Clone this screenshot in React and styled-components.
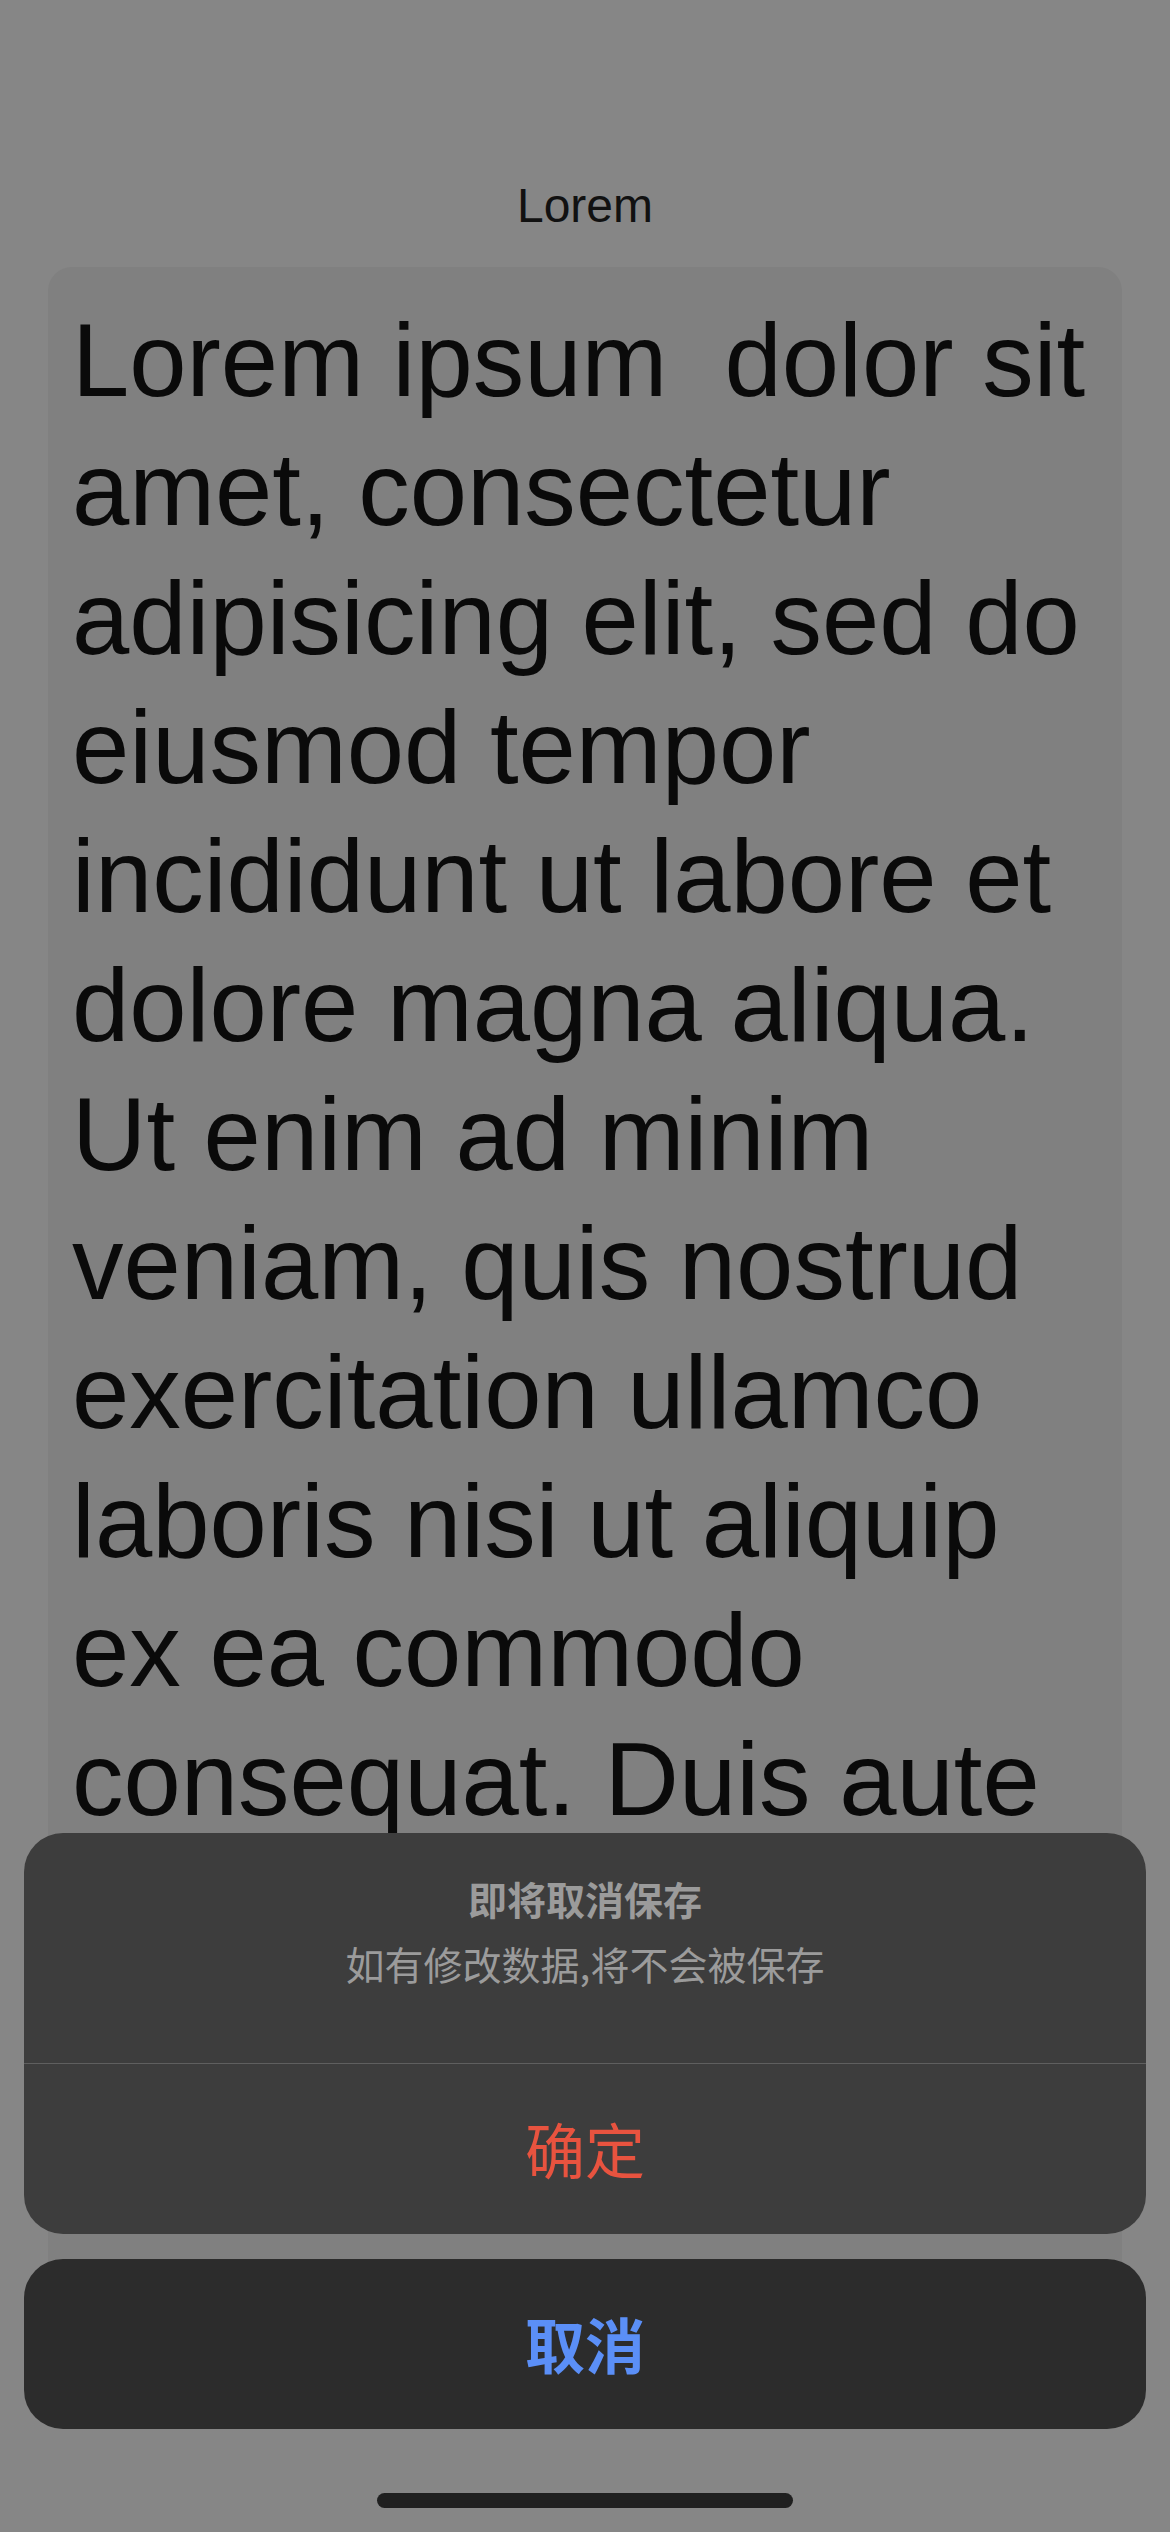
import React from 'react';
import styled, { createGlobalStyle } from 'styled-components';

const GlobalStyle = createGlobalStyle`
  html, body {
    margin: 0;
    padding: 0;
    background-color: #868686;
  }
  * {
    box-sizing: border-box;
  }
`;

const SPage = styled.div`
  position: relative;
  width: 1170px;
  height: 2532px;
  overflow: hidden;
  background-color: #868686;
  font-family: 'Liberation Sans', 'Noto Sans CJK SC', sans-serif;
`;

const STitle = styled.h1`
  margin: 0;
  padding-top: 177px;
  font-size: 48px;
  font-weight: 400;
  line-height: 58px;
  text-align: center;
  color: #111111;
`;

const SCard = styled.section`
  height: 2133px;
  margin: 32px 48px 0;
  padding: 29px 24px 0;
  overflow: hidden;
  border-radius: 24px;
  background-color: #808080;
`;

const SBody = styled.p`
  margin: 0;
  font-size: 103px;
  line-height: 129px;
  white-space: pre-wrap;
  color: #0a0a0a;
`;

const SSheet = styled.div`
  position: absolute;
  left: 0;
  right: 0;
  bottom: 0;
  display: flex;
  flex-direction: column;
  gap: 25px;
  padding: 0 24px;
`;

const SGroup = styled.div`
  display: flex;
  flex-direction: column;
  overflow: hidden;
  border-radius: 39px;
  background-color: #3d3d3d;
`;

const SHeader = styled.div`
  display: flex;
  flex-direction: column;
  align-items: center;
  gap: 23px;
  height: 231px;
  padding-top: 44px;
  border-bottom: 1px solid #5f5f5f;
  font-family: 'Noto Sans CJK SC', sans-serif;
  color: #9b9b9b;
`;

const SHeaderTitle = styled.h2`
  margin: 0;
  font-size: 39px;
  font-weight: ${({ $bold }) => ($bold ? 700 : 400)};
  line-height: 42px;
`;

const SAction = styled.button`
  display: flex;
  justify-content: center;
  align-items: center;
  width: 100%;
  height: 170px;
  padding: 0 0 4px;
  border: none;
  border-radius: ${({ $round }) => ($round ? '39px' : '0')};
  background-color: ${({ $bg }) => $bg || 'transparent'};
  font-family: 'Noto Sans CJK SC', sans-serif;
  font-size: 60px;
  font-weight: ${({ $bold }) => ($bold ? 600 : 400)};
  color: ${({ $color }) => $color};
`;

const SHomeBar = styled.div`
  display: flex;
  justify-content: center;
  height: 78px;
  padding-top: 39px;
`;

const SIndicator = styled.span`
  width: 416px;
  height: 15px;
  border-radius: 8px;
  background-color: #202020;
`;

const bodyText =
  'Lorem ipsum  dolor sit amet, consectetur adipisicing elit, sed do eiusmod tempor incididunt ut labore et dolore magna aliqua. Ut enim ad minim veniam, quis nostrud exercitation ullamco laboris nisi ut aliquip ex ea commodo consequat. Duis aute irure dolor in reprehenderit.';

function App() {
  return (
    <SPage>
      <GlobalStyle />
      <STitle>Lorem</STitle>
      <SCard>
        <SBody>{bodyText}</SBody>
      </SCard>
      <SSheet>
        <SGroup>
          <SHeader>
            <SHeaderTitle $bold>即将取消保存</SHeaderTitle>
            <SHeaderTitle>如有修改数据,将不会被保存</SHeaderTitle>
          </SHeader>
          <SAction type="button" $color="#e8533f">
            确定
          </SAction>
        </SGroup>
        <SAction type="button" $round $bold $bg="#2c2c2c" $color="#5b8ff7">
          取消
        </SAction>
        <SHomeBar>
          <SIndicator />
        </SHomeBar>
      </SSheet>
    </SPage>
  );
}

export default App;
